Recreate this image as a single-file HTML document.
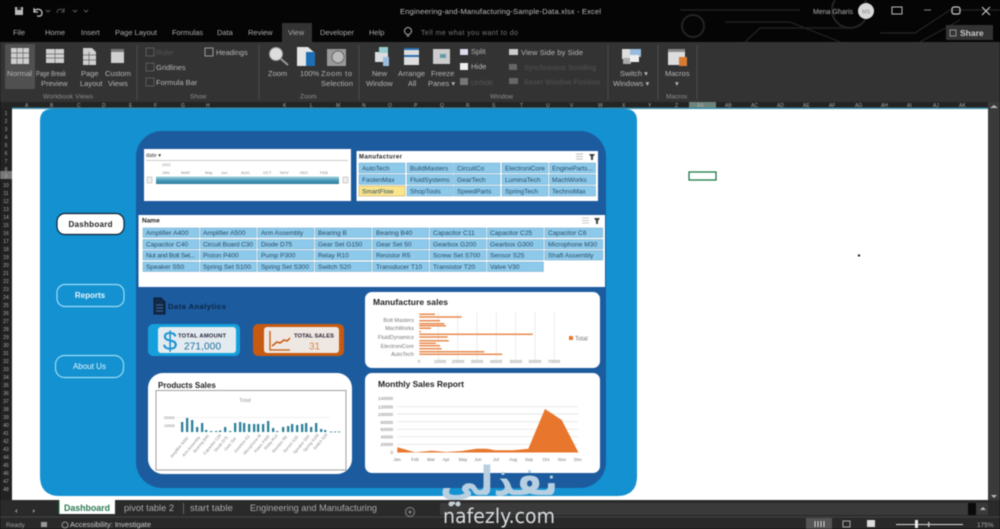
<!DOCTYPE html>
<html><head><meta charset="utf-8"><style>
html,body{margin:0;padding:0;background:#000;width:1000px;height:529px;overflow:hidden}
svg{display:block;filter:blur(.45px)}
text{font-family:"Liberation Sans",sans-serif}
.r{font-size:7.5px;fill:#b5b5b5}
.g{font-size:6.5px;fill:#8f8f8f}
.t{font-size:7.5px;fill:#aaa}
.b{fill:#8dc9ea;stroke:#6fa8c8;stroke-width:.5}
.l{font-size:6.6px;fill:#2b4c66}
.n{font-size:6px;fill:#777}
.h{font-size:5px;fill:#aaa}
</style></head><body>
<svg width="1000" height="529" viewBox="0 0 1000 529" xmlns="http://www.w3.org/2000/svg">
<rect width="1000" height="529" fill="#050505"/>
<!-- circuit bg -->
<g fill="none" stroke="#242424" stroke-width="1.2">
<path d="M680 10H800M725 22H790L840 42M745 42L760 28H850M880 33H915L950 10H1000M920 42L960 20"/>
<circle cx="693" cy="26" r="11" stroke-width="2"/><circle cx="850" cy="10" r="18" stroke-width="2"/>
</g>
<!-- title bar -->
<rect x="15" y="7" width="8" height="8" fill="#bbb"/><rect x="17" y="7" width="4" height="3" fill="#222"/>
<path d="M34 8v4h4M34 11c3-3 8-2 8 2s-3 3-5 3" fill="none" stroke="#ccc" stroke-width="1.2"/>
<path d="M64 8v4h-3M64 11c-3-3-7-2-7 2" fill="none" stroke="#555" stroke-width="1"/>
<path d="M46 10l2 2 2-2M73 10l2 2 2-2M84 10l2 2 2-2" fill="none" stroke="#777" stroke-width=".8"/>
<text x="400" y="14" font-size="7.5" fill="#bdbdbd" textLength="201">Engineering-and-Manufacturing-Sample-Data.xlsx - Excel</text>
<text x="813" y="14" font-size="7" fill="#b0b0b0" textLength="40">Mena Gharis</text>
<circle cx="866" cy="11" r="8" fill="#d8d8d8"/><text x="862" y="13.5" font-size="5.5" fill="#888">MS</text>
<rect x="892" y="7" width="10" height="7" fill="none" stroke="#bbb"/>
<path d="M924 10h7" stroke="#888"/>
<rect x="952" y="7" width="8" height="7" rx="2" fill="none" stroke="#ccc" stroke-width="1.2"/>
<path d="M982 7l8 8M990 7l-8 8" stroke="#ccc" stroke-width="1.1"/>
<rect x="946" y="25" width="47" height="15" fill="#333"/>
<text x="960" y="36" font-size="8.5" font-weight="bold" fill="#c9c9c9">Share</text>
<rect x="950" y="30" width="6" height="6" fill="none" stroke="#aaa" stroke-width=".8"/>
<!-- tabs -->
<rect x="282" y="23" width="30" height="20" fill="#333"/>
<g class="t">
<text x="13" y="35" class="t">File</text><text x="45" y="35" class="t">Home</text><text x="81" y="35" class="t">Insert</text>
<text x="115" y="35" class="t" textLength="42">Page Layout</text><text x="172" y="35" class="t" textLength="31">Formulas</text><text x="217" y="35" class="t">Data</text>
<text x="248" y="35" class="t">Review</text><text x="288" y="35" class="t">View</text><text x="320" y="35" class="t" textLength="34">Developer</text><text x="369" y="35" class="t">Help</text>
<text x="421" y="35" fill="#777" font-size="7" textLength="97">Tell me what you want to do</text>
</g>
<circle cx="408" cy="31" r="3.5" fill="none" stroke="#aaa"/><path d="M406.5 36h3" stroke="#aaa"/>
<!-- ribbon -->
<rect y="42" width="1000" height="60" fill="#333"/>
<rect x="5" y="44" width="30" height="45" fill="#505050"/>
<g stroke="#4a4a4a" stroke-width="1"><path d="M137 45v55M259 45v55M359 45v55M608 45v55M658 45v55M697 45v55"/></g>
<!-- workbook view icons -->
<g fill="#cfcfcf">
<rect x="11" y="48" width="18" height="16"/><rect x="46" y="49" width="18" height="14"/>
<path d="M83 48h9l4 4v13H83z"/><rect x="111" y="49" width="13" height="14"/></g>
<path d="M11 53h18M11 58h18M17 48v16M23 48v16M46 54h18M46 58h18M55 49v14M83 55h13M83 60h13M89 52v13" stroke="#666" stroke-width=".7"/>
<rect x="111" y="49" width="13" height="3" fill="#777"/>
<g class="r">
<text x="7" y="76" font-size="7" fill="#b5b5b5" textLength="25" lengthAdjust="spacingAndGlyphs">Normal</text><text x="36" y="76" font-size="7" fill="#b5b5b5" textLength="30" lengthAdjust="spacingAndGlyphs">Page Break</text><text x="41" y="86" class="r">Preview</text>
<text x="81" y="76" class="r">Page</text><text x="80" y="86" class="r">Layout</text><text x="105" y="76" class="r">Custom</text><text x="108" y="86" class="r">Views</text>
</g>
<text x="43" y="98.500" class="g" textLength="50">Workbook Views</text>
<!-- show -->
<g fill="none" stroke="#5a5a5a"><rect x="146" y="48" width="8" height="8"/><rect x="146" y="63" width="8" height="8"/><rect x="146" y="78" width="8" height="8"/></g>
<rect x="205" y="48" width="8" height="8" fill="none" stroke="#999"/>
<text x="156" y="55" font-size="7.5" fill="#555">Ruler</text>
<text x="156" y="70" class="r">Gridlines</text><text x="156" y="85" class="r">Formula Bar</text><text x="216" y="55" class="r">Headings</text>
<text x="190" y="98.500" class="g">Show</text>
<!-- zoom -->
<circle cx="276" cy="54" r="6.500" fill="#ddd" stroke="#999"/><path d="M281 59l7 6" stroke="#999" stroke-width="2"/>
<path d="M297 47h11l7 6v13h-18z" fill="#e5e5e5"/><rect x="306" y="52" width="9" height="14" fill="#1d6fb4"/>
<rect x="327" y="49" width="19" height="17" fill="#999"/><circle cx="338" cy="57" r="6" fill="#bbb" stroke="#666"/>
<text x="268" y="76" class="r">Zoom</text><text x="300" y="76" class="r">100%</text><text x="321" y="76" class="r" textLength="31">Zoom to</text><text x="321" y="86" class="r" textLength="32">Selection</text>
<text x="300" y="98.500" class="g">Zoom</text>
<!-- window -->
<rect x="375" y="52" width="13" height="10" fill="#ddd"/><rect x="379" y="47" width="9" height="6" fill="#9cc"/><rect x="383" y="57" width="6" height="9" fill="#9bd"/>
<rect x="404" y="48" width="15" height="17" fill="#ddd"/><path d="M404 49h15M404 56h15" stroke="#2a6fb0" stroke-width="2"/>
<rect x="433" y="49" width="17" height="15" fill="#ccc"/><rect x="440" y="54" width="6" height="4" fill="#69a"/>
<rect x="460" y="49" width="8" height="6" fill="#dde"/><rect x="460" y="63" width="8" height="7" fill="#eee"/><rect x="460" y="78" width="8" height="7" fill="#777"/>
<text x="372" y="76" class="r">New</text><text x="366" y="86" class="r">Window</text><text x="398" y="76" class="r" textLength="27">Arrange</text><text x="408" y="86" class="r">All</text>
<text x="431" y="76" class="r">Freeze</text><text x="428" y="86" class="r">Panes ▾</text>
<text x="471" y="54" class="r">Split</text><text x="471" y="69" class="r">Hide</text><text x="471" y="85" font-size="7" fill="#555">Unhide</text>
<rect x="509" y="49" width="9" height="6" fill="#ccc"/><rect x="509" y="64" width="8" height="6" fill="#666"/><rect x="509" y="78" width="9" height="6" fill="#666"/>
<text x="521" y="55" class="r" textLength="62">View Side by Side</text>
<text x="524" y="70" font-size="7" fill="#555" textLength="72">Synchronous Scrolling</text><text x="524" y="84.500" font-size="7" fill="#555" textLength="76">Reset Window Position</text>
<text x="490" y="98.500" class="g">Window</text>
<!-- switch / macros -->
<rect x="622" y="49" width="10" height="10" fill="#ddd"/><rect x="630" y="49" width="11" height="8" fill="#9bd"/><rect x="623" y="58" width="8" height="6" fill="#aaa"/><rect x="630" y="55" width="9" height="7" fill="#eee"/>
<text x="620" y="76" class="r">Switch ▾</text><text x="613" y="86" class="r">Windows ▾</text>
<rect x="668" y="49" width="17" height="16" fill="#ddd"/><rect x="668" y="49" width="17" height="3" fill="#888"/><rect x="679" y="57" width="8" height="9" fill="#d97a33"/>
<text x="665" y="76" class="r">Macros</text><text x="675" y="86" class="r">▾</text><text x="666" y="98.500" class="g">Macros</text>
<!-- col header -->
<rect y="102" width="1000" height="7" fill="#242424"/>
<rect x="689" y="102" width="27" height="7" fill="#6d8478"/>
<rect x="12" y="107.500" width="976" height="1.500" fill="#3a8aa8"/>
<g class="h">
<text x="25" y="107" class="h">A</text><text x="50" y="107" class="h">B</text><text x="77" y="107" class="h">C</text><text x="102" y="107" class="h">D</text><text x="129" y="107" class="h">E</text><text x="154" y="107" class="h">F</text><text x="181" y="107" class="h">G</text><text x="206" y="107" class="h">H</text><text x="283" y="107" class="h">K</text><text x="310" y="107" class="h">L</text><text x="336" y="107" class="h">M</text><text x="362" y="107" class="h">N</text><text x="388" y="107" class="h">O</text><text x="414" y="107" class="h">P</text><text x="440" y="107" class="h">Q</text><text x="466" y="107" class="h">R</text><text x="492" y="107" class="h">S</text><text x="520" y="107" class="h">T</text><text x="546" y="107" class="h">U</text><text x="570" y="107" class="h">V</text><text x="598" y="107" class="h">W</text><text x="622" y="107" class="h">X</text><text x="648" y="107" class="h">Y</text><text x="675" y="107" class="h">Z</text><text x="697" y="107" class="h" fill="#ddd">AA</text><text x="725" y="107" class="h">AB</text><text x="751" y="107" class="h">AC</text><text x="777" y="107" class="h">AD</text><text x="803" y="107" class="h">AE</text><text x="829" y="107" class="h">AF</text><text x="855" y="107" class="h">AG</text><text x="881" y="107" class="h">AH</text><text x="907" y="107" class="h">AI</text><text x="933" y="107" class="h">AJ</text><text x="959" y="107" class="h">AK</text>
</g>
<!-- row header -->
<rect x="0" y="109" width="12" height="391" fill="#222"/>
<rect x="0" y="171" width="12" height="8" fill="#777"/>
<g class="h" text-anchor="middle">
<text x="6" y="115" class="h">1</text><text x="6" y="123" class="h">2</text><text x="6" y="131" class="h">3</text><text x="6" y="139" class="h">4</text><text x="6" y="147" class="h">5</text><text x="6" y="155" class="h">6</text><text x="6" y="163" class="h">7</text><text x="6" y="171" class="h">8</text><text x="6" y="178" class="h" fill="#eee">9</text><text x="6" y="187" class="h">10</text><text x="6" y="195" class="h">11</text><text x="6" y="203" class="h">12</text><text x="6" y="211" class="h">13</text><text x="6" y="219" class="h">14</text><text x="6" y="227" class="h">15</text><text x="6" y="235" class="h">16</text><text x="6" y="243" class="h">17</text><text x="6" y="251" class="h">18</text><text x="6" y="259" class="h">19</text><text x="6" y="267" class="h">20</text><text x="6" y="275" class="h">21</text><text x="6" y="283" class="h">22</text><text x="6" y="291" class="h">23</text><text x="6" y="299" class="h">24</text><text x="6" y="307" class="h">25</text><text x="6" y="315" class="h">26</text><text x="6" y="323" class="h">27</text><text x="6" y="331" class="h">28</text><text x="6" y="339" class="h">29</text><text x="6" y="347" class="h">30</text><text x="6" y="355" class="h">31</text><text x="6" y="363" class="h">32</text><text x="6" y="371" class="h">33</text><text x="6" y="379" class="h">34</text><text x="6" y="387" class="h">35</text><text x="6" y="395" class="h">36</text><text x="6" y="403" class="h">37</text><text x="6" y="411" class="h">38</text><text x="6" y="419" class="h">39</text><text x="6" y="427" class="h">40</text><text x="6" y="435" class="h">41</text><text x="6" y="443" class="h">42</text><text x="6" y="451" class="h">43</text><text x="6" y="459" class="h">44</text><text x="6" y="467" class="h">45</text><text x="6" y="475" class="h">46</text><text x="6" y="483" class="h">47</text><text x="6" y="491" class="h">48</text>
</g>
<!-- sheet -->
<rect x="12" y="109" width="976" height="391" fill="#fff"/>
<rect x="988" y="102" width="12" height="398" fill="#3a3a3a"/>
<path d="M990 108l4-3 4 3M991 495h6l-3 3z" fill="#bbb"/>
<rect x="689" y="172" width="27" height="8" fill="none" stroke="#1b7a45" stroke-width="1.3"/>
<rect x="858" y="254.500" width="2" height="2" fill="#111"/>
<!-- main panels -->
<path d="M52 109H625Q637 109 637 121V476Q637 496 617 496H60Q40 496 40 476V121Q40 109 52 109Z" fill="#1391d0"/>
<rect x="136" y="131" width="470" height="357" rx="26" fill="#1c5b9e"/>
<!-- nav -->
<rect x="57" y="213.500" width="67" height="21" rx="8" fill="#fff" stroke="#123" stroke-width="1.200"/>
<text x="90.500" y="227" font-size="8" font-weight="bold" fill="#222" text-anchor="middle" textLength="44">Dashboard</text>
<rect x="57" y="284.500" width="67" height="22" rx="8" fill="none" stroke="#9edcf5" stroke-width="1.200"/>
<text x="90" y="298" font-size="8" font-weight="bold" fill="#e8f6fd" text-anchor="middle">Reports</text>
<rect x="55.500" y="355.500" width="68" height="22" rx="9" fill="none" stroke="#9edcf5" stroke-width="1.200"/>
<text x="89.500" y="369" font-size="8" fill="#e8f6fd" text-anchor="middle">About Us</text>
<!-- date slicer -->
<rect x="144" y="149" width="207" height="52" fill="#fff"/>
<text x="146" y="157" font-size="5.5" fill="#333">date ▾</text><path d="M146 160.500h202" stroke="#ccc"/>
<text x="162" y="166" font-size="4" fill="#888">2021</text>
<g font-size="4" fill="#888"><text x="162" y="174">JAN</text><text x="181" y="174">MAR</text><text x="205" y="174">May</text><text x="221" y="174">Jun</text><text x="241" y="174">AUG</text><text x="263" y="174">OCT</text><text x="280" y="174">NOV</text><text x="300" y="174">DEC</text><text x="320" y="174">FEB</text></g>
<defs><linearGradient id="tl" x1="0" y1="0" x2="0" y2="1"><stop offset="0" stop-color="#a7d4e2"/><stop offset=".5" stop-color="#4a9bbb"/><stop offset="1" stop-color="#2f7a9c"/></linearGradient></defs>
<rect x="156" y="176.500" width="183" height="7.500" fill="url(#tl)"/>
<rect x="147" y="177" width="5" height="6" fill="#eee" stroke="#aaa" stroke-width=".5"/><rect x="343" y="177" width="5" height="6" fill="#eee" stroke="#aaa" stroke-width=".5"/>
<!-- manufacturers -->
<rect x="356.500" y="151" width="241.500" height="50" fill="#fff"/>
<text x="359" y="158.500" font-size="6" font-weight="bold" fill="#222" textLength="43">Manufacturer</text>
<path d="M576 154h7M576 156.500h7M576 159h7" stroke="#aaa" stroke-width=".7"/><path d="M589 154h6l-2 3v3h-2v-3z" fill="#444"/>
<g>
<rect x="359" y="163" width="46" height="10" class="b"/><rect x="407" y="163" width="46" height="10" class="b"/><rect x="454" y="163" width="46" height="10" class="b"/><rect x="502" y="163" width="46" height="10" class="b"/><rect x="549.500" y="163" width="46" height="10" class="b"/>
<rect x="359" y="174.500" width="46" height="10" class="b"/><rect x="407" y="174.500" width="46" height="10" class="b"/><rect x="454" y="174.500" width="46" height="10" class="b"/><rect x="502" y="174.500" width="46" height="10" class="b"/><rect x="549.500" y="174.500" width="46" height="10" class="b"/>
<rect x="359" y="186" width="46" height="10" fill="#fbe58c" stroke="#b89c50" stroke-width=".5"/><rect x="407" y="186" width="46" height="10" class="b"/><rect x="454" y="186" width="46" height="10" class="b"/><rect x="502" y="186" width="46" height="10" class="b"/><rect x="549.500" y="186" width="46" height="10" class="b"/>
<text x="362" y="170.500" class="l">AutoTech</text><text x="410" y="170.500" class="l">BuildMasters</text><text x="457" y="170.500" class="l">CircuitCo</text><text x="505" y="170.500" class="l">ElectroniCore</text><text x="552" y="170.500" class="l" textLength="41">EngineParts...</text>
<text x="362" y="182" class="l">FastenMax</text><text x="410" y="182" class="l">FluidSystems</text><text x="457" y="182" class="l">GearTech</text><text x="505" y="182" class="l">LuminaTech</text><text x="552" y="182" class="l">MachWorks</text>
<text x="362" y="193.500" class="l">SmartFlow</text><text x="410" y="193.500" class="l">ShopTools</text><text x="457" y="193.500" class="l">SpeedParts</text><text x="505" y="193.500" class="l">SpringTech</text><text x="552" y="193.500" class="l">TechnoMax</text>
</g>
<!-- name slicer -->
<rect x="138.500" y="215" width="466.500" height="72" fill="#fff"/>
<text x="142" y="222.500" font-size="6.500" font-weight="bold" fill="#222">Name</text>
<path d="M582 218h7M582 220.500h7M582 223h7" stroke="#bbb" stroke-width=".7"/><path d="M594 218h6l-2 3v3h-2v-3z" fill="#444"/>
<g>
<rect x="143" y="228" width="56" height="9.500" class="b"/><rect x="200.400" y="228" width="56" height="9.500" class="b"/><rect x="257.800" y="228" width="56" height="9.500" class="b"/><rect x="315.200" y="228" width="56" height="9.500" class="b"/><rect x="372.600" y="228" width="56" height="9.500" class="b"/><rect x="430" y="228" width="56" height="9.500" class="b"/><rect x="487.400" y="228" width="56" height="9.500" class="b"/><rect x="544.800" y="228" width="58" height="9.500" class="b"/>
<rect x="143" y="239.500" width="56" height="9.500" class="b"/><rect x="200.400" y="239.500" width="56" height="9.500" class="b"/><rect x="257.800" y="239.500" width="56" height="9.500" class="b"/><rect x="315.200" y="239.500" width="56" height="9.500" class="b"/><rect x="372.600" y="239.500" width="56" height="9.500" class="b"/><rect x="430" y="239.500" width="56" height="9.500" class="b"/><rect x="487.400" y="239.500" width="56" height="9.500" class="b"/><rect x="544.800" y="239.500" width="58" height="9.500" class="b"/>
<rect x="143" y="250.500" width="56" height="9.500" class="b"/><rect x="200.400" y="250.500" width="56" height="9.500" class="b"/><rect x="257.800" y="250.500" width="56" height="9.500" class="b"/><rect x="315.200" y="250.500" width="56" height="9.500" class="b"/><rect x="372.600" y="250.500" width="56" height="9.500" class="b"/><rect x="430" y="250.500" width="56" height="9.500" class="b"/><rect x="487.400" y="250.500" width="56" height="9.500" class="b"/><rect x="544.800" y="250.500" width="58" height="9.500" class="b"/>
<rect x="143" y="262" width="56" height="9.500" class="b"/><rect x="200.400" y="262" width="56" height="9.500" class="b"/><rect x="257.800" y="262" width="56" height="9.500" class="b"/><rect x="315.200" y="262" width="56" height="9.500" class="b"/><rect x="372.600" y="262" width="56" height="9.500" class="b"/><rect x="430" y="262" width="56" height="9.500" class="b"/><rect x="487.400" y="262" width="56" height="9.500" class="b"/>
<text x="146" y="235" class="l">Amplifier A400</text><text x="203" y="235" class="l">Amplifier A500</text><text x="261" y="235" class="l">Arm Assembly</text><text x="318" y="235" class="l">Bearing B</text><text x="376" y="235" class="l">Bearing B40</text><text x="433" y="235" class="l">Capacitor C11</text><text x="490" y="235" class="l">Capacitor C25</text><text x="548" y="235" class="l">Capacitor C6</text>
<text x="146" y="246.500" class="l">Capacitor C40</text><text x="203" y="246.500" class="l" textLength="50">Circuit Board C30</text><text x="261" y="246.500" class="l">Diode D75</text><text x="318" y="246.500" class="l">Gear Set G150</text><text x="376" y="246.500" class="l">Gear Set 50</text><text x="433" y="246.500" class="l">Gearbox G200</text><text x="490" y="246.500" class="l">Gearbox G300</text><text x="548" y="246.500" class="l">Microphone M30</text>
<text x="146" y="257.500" class="l" textLength="49">Nut and Bolt Set...</text><text x="203" y="257.500" class="l">Piston P400</text><text x="261" y="257.500" class="l">Pump P300</text><text x="318" y="257.500" class="l">Relay R10</text><text x="376" y="257.500" class="l">Resistor R5</text><text x="433" y="257.500" class="l">Screw Set S700</text><text x="490" y="257.500" class="l">Sensor S25</text><text x="548" y="257.500" class="l">Shaft Assembly</text>
<text x="146" y="269" class="l">Speaker S50</text><text x="203" y="269" class="l">Spring Set S100</text><text x="261" y="269" class="l">Spring Set S300</text><text x="318" y="269" class="l">Switch S20</text><text x="376" y="269" class="l">Transducer T10</text><text x="433" y="269" class="l">Transistor T20</text><text x="490" y="269" class="l">Valve V30</text>
</g>
<!-- data analytics -->
<path d="M154 298h7l4 4v12h-11z" fill="#12294a" stroke="#0b1c33"/><path d="M156 305h7M156 308h7M156 311h7" stroke="#4d7ba8" stroke-width=".8"/>
<text x="168" y="309" font-size="7.500" font-weight="bold" fill="#0e2340" textLength="58">Data Analytics</text>
<!-- KPI cards -->
<rect x="148" y="324" width="92" height="32" rx="5" fill="#15a0dc"/>
<rect x="158" y="327" width="78" height="26" rx="3" fill="#e3ebf1"/>
<text x="170" y="350" font-size="26" fill="#1c94d0" text-anchor="middle">$</text>
<text x="178" y="337.500" font-size="5.800" font-weight="bold" fill="#223" textLength="48">TOTAL AMOUNT</text>
<text x="184" y="349.500" font-size="10" fill="#1f6d9b" textLength="37">271,000</text>
<rect x="253" y="324" width="91" height="32" rx="5" fill="#c75a12"/>
<rect x="264" y="327" width="75" height="26" rx="3" fill="#efe7e1"/>
<path d="M270 331v19h20" fill="none" stroke="#c75a12" stroke-width="1.300"/>
<path d="M272 346l5-4 3 1 4-3 3 1 3-3" fill="none" stroke="#c75a12" stroke-width="1.500"/>
<text x="294" y="337.500" font-size="5.800" font-weight="bold" fill="#223" textLength="40">TOTAL SALES</text>
<text x="309" y="349.500" font-size="10" fill="#d48a55">31</text>
<!-- products -->
<rect x="148" y="373" width="204" height="101" rx="15" fill="#fff"/>
<text x="158" y="388" font-size="8" font-weight="bold" fill="#222">Products Sales</text>
<rect x="156" y="390.500" width="190" height="79.500" fill="#fff" stroke="#888" stroke-width=".8"/>
<text x="245" y="402" font-size="5.500" fill="#999" text-anchor="middle">Total</text>
<path d="M178 417.500H330" stroke="#e5e5e5" stroke-width=".6"/>
<text x="164" y="419" font-size="3.800" fill="#777">20000</text><text x="164" y="427" font-size="3.800" fill="#777">10000</text>
<g fill="#2c7f99">
<rect x="181" y="422" width="2.300" height="10"/><rect x="186" y="418" width="2.300" height="14"/><rect x="191" y="420" width="2.300" height="12"/><rect x="196" y="427" width="2.300" height="5"/><rect x="201" y="423" width="2.300" height="9"/><rect x="205" y="430" width="2.300" height="2"/><rect x="210" y="431" width="2.300" height="1"/><rect x="215" y="431" width="2.300" height="1"/><rect x="219" y="430.500" width="2.300" height="1.500"/><rect x="224" y="427" width="2.300" height="5"/><rect x="229" y="431" width="2.300" height="1"/><rect x="234" y="423" width="2.300" height="9"/><rect x="239" y="422" width="2.300" height="10"/><rect x="243" y="423" width="2.300" height="9"/><rect x="248" y="424" width="2.300" height="8"/><rect x="253" y="424" width="2.300" height="8"/><rect x="257" y="424" width="2.300" height="8"/><rect x="262" y="424" width="2.300" height="8"/><rect x="267" y="421" width="2.300" height="11"/><rect x="272" y="428" width="2.300" height="4"/><rect x="276" y="431" width="2.300" height="1"/><rect x="282" y="427" width="2.300" height="5"/><rect x="287" y="426" width="2.300" height="6"/><rect x="291" y="424" width="2.300" height="8"/><rect x="296" y="425" width="2.300" height="7"/><rect x="301" y="424" width="2.300" height="8"/><rect x="305" y="423" width="2.300" height="9"/><rect x="310" y="427" width="2.300" height="5"/><rect x="315" y="423" width="2.300" height="9"/><rect x="320" y="429" width="2.300" height="3"/><rect x="324" y="430" width="2.300" height="2"/><rect x="330" y="431.500" width="2.300" height=".8"/><rect x="334" y="431.500" width="2.300" height=".8"/><rect x="338" y="431.500" width="2.300" height=".8"/>
</g>
<g font-size="4" fill="#888">
<text transform="translate(172 458) rotate(-50)">Amplifier A400</text><text transform="translate(184 457) rotate(-50)">Arm Assembly</text><text transform="translate(195 453) rotate(-50)">Bearing B40</text><text transform="translate(205 455) rotate(-50)">Capacitor C25</text><text transform="translate(216 452) rotate(-50)">Diode D75</text><text transform="translate(226 451) rotate(-50)">Gear Set</text><text transform="translate(236 453) rotate(-50)">Gearbox G2</text><text transform="translate(245 455) rotate(-50)">Microphone M</text><text transform="translate(256 453) rotate(-50)">Piston P400</text><text transform="translate(266 450) rotate(-50)">Relay R10</text><text transform="translate(274 453) rotate(-50)">Resistor R5</text><text transform="translate(285 453) rotate(-50)">Sensor S25</text><text transform="translate(295 454) rotate(-50)">Speaker S50</text><text transform="translate(305 452) rotate(-50)">Spring S100</text><text transform="translate(315 450) rotate(-50)">Switch S20</text>
</g>
<!-- manufacture sales -->
<rect x="365" y="292" width="235" height="76" rx="7" fill="#fff"/>
<text x="373" y="305" font-size="8.500" font-weight="bold" fill="#222" textLength="75">Manufacture sales</text>
<path d="M438.300 312v48M457.700 312v48M477 312v48M496.300 312v48M515.700 312v48M535 312v48M554.300 312v48" stroke="#e2e2e2" stroke-width=".6"/>
<g stroke="#e88a4e" stroke-width="1.500">
<path d="M419.300 314.300H435M419.300 317H461.700M419.300 320.700H440M419.300 323.700H444.300M419.300 325.700H446M419.300 328.300H431M419.300 331.700H421M419.300 334.300H532.700M419.300 337H447.700M419.300 340.700H448.700M419.300 343.300H436M419.300 345.700H440M419.300 348.700H441.700M419.300 351.700H484.300M419.300 354.300H502.300"/>
</g>
<g font-size="5.500" fill="#777" text-anchor="end"><text x="414" y="322">Bolt Masters</text><text x="414" y="330">MachWorks</text><text x="414" y="339">FluidDynamics</text><text x="414" y="348">ElectroniCore</text><text x="414" y="356">AutoTech</text></g>
<g font-size="4.500" fill="#888" text-anchor="middle"><text x="419" y="363">0</text><text x="440" y="363">10000</text><text x="458" y="363">20000</text><text x="477" y="363">30000</text><text x="496" y="363">40000</text><text x="516" y="363">50000</text><text x="535" y="363">60000</text><text x="554" y="363">70000</text></g>
<rect x="569" y="336" width="4" height="4" fill="#e8762c"/><text x="575" y="340.500" font-size="6" fill="#777">Total</text>
<!-- monthly -->
<rect x="365" y="373" width="235" height="100" rx="7" fill="#fff"/>
<text x="378" y="387" font-size="8.500" font-weight="bold" fill="#222" textLength="86">Monthly Sales Report</text>
<path d="M397 406.700H578M397 414H578M397 421.700H578M397 429.300H578M397 436.700H578M397 444.300H578" stroke="#ddd" stroke-width=".7"/>
<g font-size="4.500" fill="#777" text-anchor="end"><text x="393" y="400">140000</text><text x="393" y="408.500">120000</text><text x="393" y="416">100000</text><text x="393" y="424">80000</text><text x="393" y="431">60000</text><text x="393" y="438.500">40000</text><text x="393" y="446">20000</text><text x="393" y="454">0</text></g>
<path d="M397.300 447.300L415 452.300L431.700 450.700L446.700 452L461.700 451L476.700 448.700L486.700 448.700L495 450.300L513.300 450.300L528.300 448.700L545 409L561.700 420L578.300 452.300L578.300 452.500H397.300Z" fill="#e8762c"/>
<g font-size="4.500" fill="#777" text-anchor="middle"><text x="397" y="461">Jan</text><text x="415" y="461">Feb</text><text x="431" y="461">Mar</text><text x="446" y="461">Apr</text><text x="463" y="461">May</text><text x="478" y="461">Jun</text><text x="496" y="461">Jul</text><text x="513" y="461">Aug</text><text x="529" y="461">Sep</text><text x="546" y="461">Oct</text><text x="562" y="461">Nov</text><text x="578" y="461">Dec</text></g>
<!-- tabs bar -->
<rect y="500" width="1000" height="17" fill="#2a2a2a"/>
<rect x="0" y="516.500" width="1000" height="1" fill="#444"/>
<rect x="0" y="517.500" width="1000" height="11.500" fill="#292929"/>
<rect x="440" y="503" width="548" height="12" fill="#3a3a3a"/>
<rect x="968" y="503" width="8" height="12" fill="#0a0a0a"/>
<path d="M980 510l3-3 3 3z" fill="#bbb"/>
<path d="M15 511l2-2v4zM33 509l2 2-2 2z" fill="#999"/>
<rect x="59" y="500" width="56" height="14" fill="#fff"/>
<path d="M59 500v14" stroke="#1d7a45"/>
<text x="64" y="511" font-size="9" font-weight="bold" fill="#2c7a52" textLength="46" lengthAdjust="spacingAndGlyphs">Dashboard</text>
<text x="124" y="511" font-size="9.500" fill="#aaa" textLength="50" lengthAdjust="spacingAndGlyphs">pivot table 2</text>
<path d="M183.500 503v11" stroke="#666"/>
<text x="190" y="511" font-size="9.500" fill="#aaa" textLength="43" lengthAdjust="spacingAndGlyphs">start table</text>
<text x="250" y="511" font-size="9.500" fill="#aaa" textLength="127" lengthAdjust="spacingAndGlyphs">Engineering and Manufacturing</text>
<circle cx="410" cy="512" r="4.500" fill="none" stroke="#888"/><path d="M408 512h4M410 510v4" stroke="#888"/>
<!-- status -->
<text x="6" y="527" font-size="6.500" fill="#999">Ready</text>
<rect x="41" y="522" width="6" height="5" fill="#999"/>
<circle cx="65" cy="525" r="3" fill="none" stroke="#999"/>
<text x="70" y="527" font-size="7.500" fill="#ccc" textLength="81" lengthAdjust="spacingAndGlyphs">Accessibility: Investigate</text>
<rect x="806" y="518" width="26" height="11" fill="#555"/>
<path d="M815 521v6M818 521v6M821 521v6M824 521v6" stroke="#ddd"/>
<rect x="843" y="521" width="7" height="6" fill="none" stroke="#aaa"/>
<rect x="867" y="520" width="8" height="7" fill="#ddd"/>
<path d="M896 524.500h67" stroke="#ddd"/><rect x="915" y="520" width="3" height="8" fill="#eee"/><rect x="928" y="522" width="1.500" height="5" fill="#bbb"/>
<text x="977" y="527" font-size="6.500" fill="#aaa">175%</text>
<!-- watermark -->
<text x="440" y="495" font-size="40" font-weight="bold" fill="#b7cfe0" textLength="118" lengthAdjust="spacingAndGlyphs" style="font-family:'DejaVu Sans',sans-serif">نفذلي</text>
<text x="443" y="523" font-size="20" fill="#d9dde0" textLength="112" lengthAdjust="spacingAndGlyphs" style="font-family:'DejaVu Sans',sans-serif">nafezly.com</text>
<circle cx="451" cy="504" r="2.500" fill="#c8ced2"/><circle cx="458" cy="504" r="2.500" fill="#c8ced2"/>
</svg>
</body></html>
